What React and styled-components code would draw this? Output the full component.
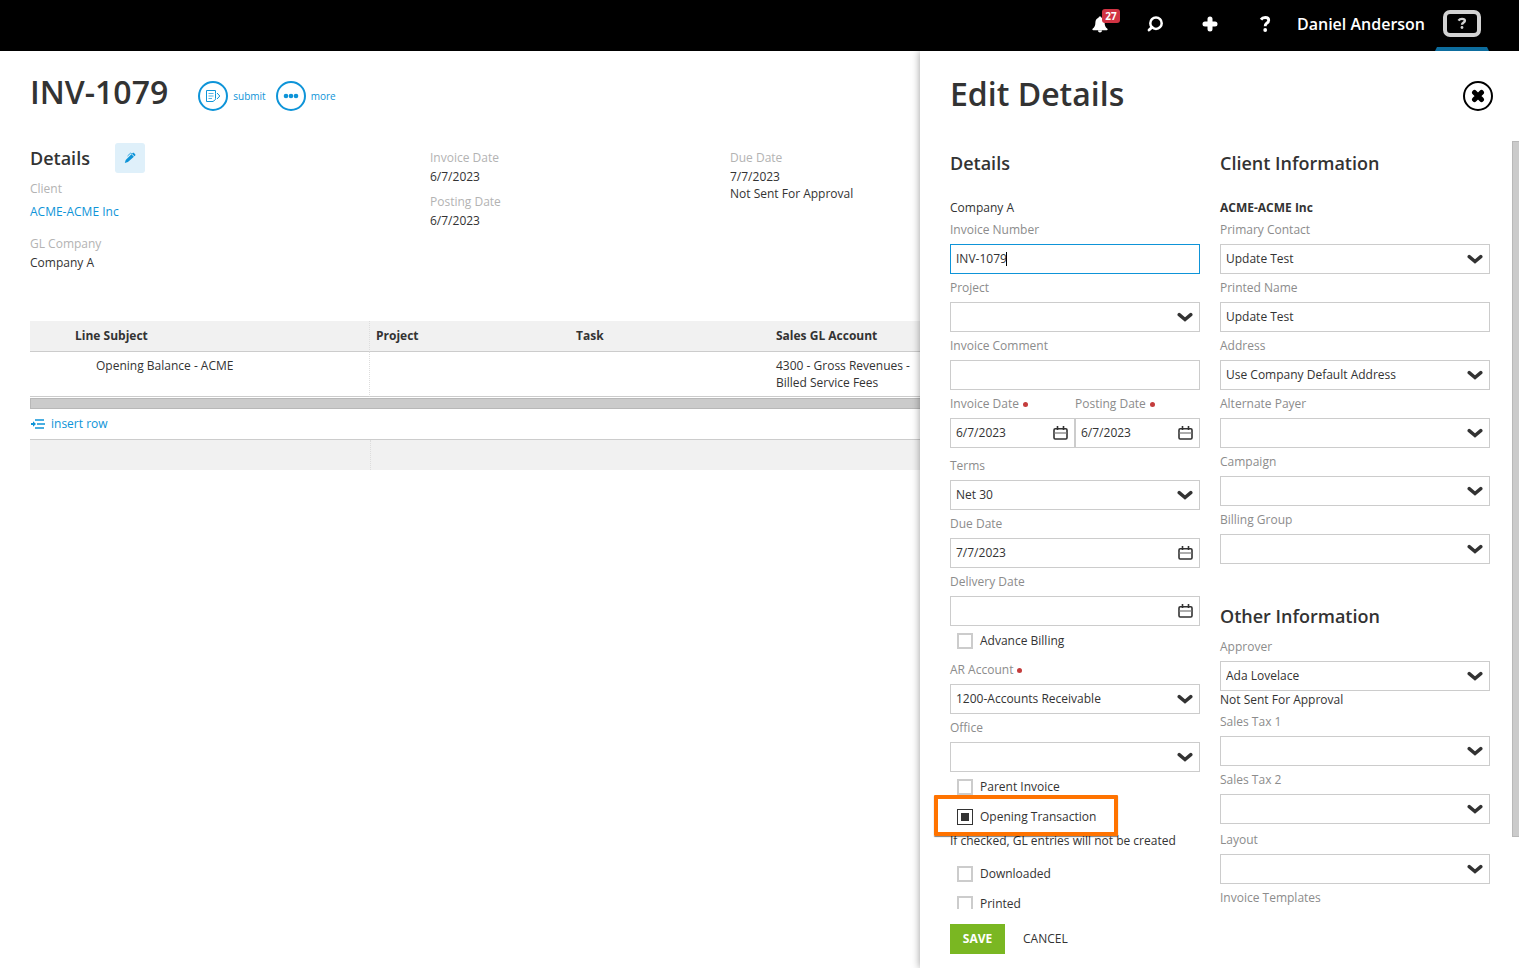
import React, { useState } from "react";
import styled, { createGlobalStyle } from "styled-components";

const GlobalStyle = createGlobalStyle`
  * {
    box-sizing: border-box;
  }
  body {
    margin: 0;
    background: #fff;
    color: #333;
    font-family: "Open Sans", "Liberation Sans", sans-serif;
    font-size: 12px;
    line-height: 17px;
  }
  button, input, select {
    font: inherit;
    color: inherit;
  }
  button {
    border: 0;
    padding: 0;
    background: none;
    cursor: pointer;
  }
`;

const Page = styled.div`
  display: flex;
  flex-direction: column;
  height: 100vh;
  overflow: hidden;
`;

/* ---------- top bar ---------- */

const TopBar = styled.header`
  display: flex;
  flex: none;
  justify-content: flex-end;
  height: 51px;
  padding-right: 30px;
  background: #000;
  color: #fff;
`;

const BarButton = styled.button`
  position: relative;
  display: flex;
  align-items: center;
  justify-content: center;
  width: 55px;
  height: 48px;
`;

const Badge = styled.span`
  position: absolute;
  top: 9px;
  left: 29px;
  width: 18px;
  height: 14px;
  border-radius: 3px;
  background: #d13343;
  font-size: 10px;
  font-weight: 700;
  line-height: 14px;
  text-align: center;
`;

const UserButton = styled.button`
  height: 48px;
  margin-left: 4px;
  font-size: 16px;
  font-weight: 600;
`;

const HelpTab = styled.button`
  display: flex;
  flex-direction: column;
  align-items: center;
  justify-content: space-between;
  width: 54px;
  height: 51px;
  margin-left: 10px;
  padding-top: 10px;
`;

/* ---------- invoice ---------- */

const Body = styled.div`
  display: flex;
  flex: 1;
  min-height: 0;
`;

const Invoice = styled.main`
  flex: 1;
  min-width: 0;
  padding: 20px 0 0 30px;
  overflow: hidden;
`;

const TitleRow = styled.div`
  display: flex;
  align-items: center;
  gap: 30px;
  height: 44px;
`;

const Title = styled.h1`
  margin: 0;
  padding-bottom: 2px;
  font-size: 32px;
  font-weight: 600;
  line-height: 44px;
`;

const Actions = styled.div`
  display: flex;
  gap: 10px;
  padding-top: 6px;
`;

const RoundAction = styled.button`
  display: flex;
  align-items: center;
  gap: 5px;
  color: #0e94d8;
  font-size: 10px;
`;

const Ring = styled.span`
  display: flex;
  align-items: center;
  justify-content: center;
  width: 30px;
  height: 30px;
  border: 2px solid #0e94d8;
  border-radius: 50%;
`;

const Summary = styled.section`
  display: grid;
  grid-template-columns: 400px 300px 1fr;
  margin-top: 28px;
`;

const SummaryColumn = styled.div`
  padding-top: ${(props) => (props.$first ? "0" : "6px")};
`;

const SummaryHead = styled.div`
  display: flex;
  align-items: center;
  gap: 25px;
  height: 30px;
  margin-bottom: 7px;
`;

const SectionTitle = styled.h2`
  margin: 0;
  font-size: 18px;
  font-weight: 600;
  line-height: 34px;
`;

const EditButton = styled.button`
  display: flex;
  align-items: center;
  justify-content: center;
  width: 30px;
  height: 30px;
  border-radius: 3px;
  background: #dff0fa;
`;

const Facts = styled.dl`
  margin: 0 0 8px;
`;

const FactLabel = styled.dt`
  padding-bottom: 2px;
  color: #b3b3b3;
`;

const FactValue = styled.dd`
  margin: 0;
  padding: ${(props) => (props.$spaced ? "4px 0 7px" : "0")};
`;

const Link = styled.a`
  color: #0e94d8;
  text-decoration: none;
`;

const Lines = styled.section`
  margin-top: 42px;
`;

const LinesTable = styled.table`
  width: 100%;
  table-layout: fixed;
  border-collapse: separate;
  border-spacing: 0;
`;

const Col = styled.col`
  width: ${(props) => props.$width};
`;

const Th = styled.th`
  height: 31px;
  padding: 0 6px 2px;
  padding-left: ${(props) => (props.$lead ? "45px" : "6px")};
  border-right: ${(props) => (props.$lead ? "1px dotted #ddd" : "0")};
  border-bottom: 1px solid #ccc;
  background: #f1f1f1;
  font-weight: 700;
  text-align: left;
`;

const Td = styled.td`
  padding: 5px 6px;
  padding-left: ${(props) => (props.$lead ? "66px" : "6px")};
  border-right: ${(props) => (props.$lead ? "1px dotted #ddd" : "0")};
  border-bottom: 1px solid #ccc;
  vertical-align: top;
`;

const ScrollBar = styled.div`
  height: 11px;
  margin-top: 1px;
  border: 1px solid #b8b8b8;
  border-right: 0;
  background: #cbcbcb;
`;

const InsertRow = styled.div`
  display: flex;
  align-items: center;
  height: 31px;
  padding-bottom: 1px;
  border-bottom: 1px solid #ccc;
`;

const InsertButton = styled.button`
  display: flex;
  align-items: center;
  gap: 6px;
  color: #0e94d8;
`;

const Totals = styled.div`
  height: 30px;
  background: #f1f1f1;
`;

const TotalsLead = styled.div`
  width: 341px;
  height: 30px;
  border-right: 1px dotted #ddd;
`;

/* ---------- edit drawer ---------- */

const Drawer = styled.aside`
  z-index: 1;
  display: flex;
  flex: 0 0 599px;
  flex-direction: column;
  background: #fff;
  box-shadow: 0 0 8px rgba(0, 0, 0, 0.4);
  clip-path: inset(0 0 0 -12px);
`;

const DrawerHead = styled.div`
  display: flex;
  flex: none;
  align-items: center;
  justify-content: space-between;
  height: 90px;
  padding: 0 26px 2px 30px;
`;

const CloseButton = styled.button`
  display: flex;
  align-items: center;
  justify-content: center;
  width: 30px;
  height: 30px;
  margin-top: 2px;
  border: 2px solid #000;
  border-radius: 50%;
`;

const DrawerBody = styled.div`
  display: flex;
  flex: 1;
  gap: 20px;
  min-height: 0;
  padding-left: 30px;
  overflow: hidden;
`;

const Column = styled.div`
  flex: ${(props) => props.$grow} 1 0;
  padding-top: 5px;
`;

const Intro = styled.div`
  padding-top: 19px;
  font-weight: ${(props) => (props.$strong ? 700 : 400)};
`;

const Note = styled.p`
  margin: 0;
  padding-bottom: ${(props) => (props.$below ? "10px" : "0")};
`;

const Block = styled.section`
  margin-top: ${(props) => (props.$below ? "35px" : "0")};
`;

const VScroll = styled.div`
  width: 7px;
  height: calc(100% - 72px);
  margin-left: 2px;
  border: 1px solid #b8b8b8;
  border-right: 0;
  background: #cbcbcb;
`;

const FieldBox = styled.div`
  flex: 1;
  min-width: 0;
  padding-top: ${(props) => (props.$gap ? "2px" : "0")};
`;

const Label = styled.label`
  display: flex;
  align-items: center;
  gap: 4px;
  height: 28px;
  padding-bottom: 1px;
  color: #8c8c8c;
`;

const Dot = styled.span`
  width: 5px;
  height: 5px;
  margin-top: 2px;
  border-radius: 50%;
  background: #c43d3d;
`;

const Control = styled.div`
  display: grid;
  align-items: center;
  > * {
    grid-area: 1 / 1;
  }
  > svg {
    justify-self: end;
    margin-right: 7px;
    pointer-events: none;
  }
`;

const TextInput = styled.input`
  width: 100%;
  height: 30px;
  padding: 0 5px 2px;
  border: 1px solid ${(props) => (props.$active ? "#0e94d8" : "#ccc")};
  border-radius: 0;
  outline: 0;
  background: #fff;
`;

const SelectInput = styled(TextInput).attrs({ as: "select" })`
  appearance: none;
`;

const Caret = styled.span`
  width: 1px;
  height: 14px;
  margin-left: 56px;
  background: #000;
`;

const DatePair = styled.div`
  display: flex;
  padding-bottom: 4px;
`;

const CheckRow = styled.div`
  position: relative;
  display: flex;
  align-items: center;
  height: 30px;
  padding-left: 7px;
`;

const CheckLabel = styled.label`
  padding: 0 0 1px 7px;
`;

const CheckBox = styled.input`
  width: 16px;
  height: 16px;
  margin: 0;
  appearance: none;
  border: 2px solid #ccc;
  background: #fff;
  &:checked {
    border: 1px solid #333;
    background: #333;
    box-shadow: inset 0 0 0 3px #fff;
  }
`;

const Highlight = styled.span`
  position: absolute;
  top: -7px;
  left: -16px;
  width: 184px;
  height: 41px;
  border: 4px solid #ff7300;
  border-radius: 1px;
  box-shadow: 0 1px 1px rgba(0, 0, 0, 0.5);
  pointer-events: none;
`;

const DrawerFoot = styled.div`
  display: flex;
  flex: none;
  gap: 18px;
  height: 59px;
  padding: 15px 30px 0;
`;

const SaveButton = styled.button`
  width: 55px;
  height: 30px;
  padding-bottom: 2px;
  background: #7ab722;
  color: #fff;
  font-weight: 700;
`;

const CancelButton = styled.button`
  height: 30px;
  padding-bottom: 2px;
  font-weight: 500;
`;

/* ---------- icons ---------- */

const BellIcon = () => (
  <svg width="16" height="17" viewBox="0 0 16 17" fill="#fff">
    <path d="M8 0.5c.8 0 1.4.5 1.5 1.3 2 .7 3 2.300 3.100 4.400.1 3.200.5 4.800 2.800 6.500.5.6.2 1.500-.6 1.500H1.200c-.8 0-1.100-.9-.6-1.500C2.900 11 3.300 9.400 3.400 6.200 3.500 4.100 4.500 2.500 6.500 1.800 6.600 1 7.200.5 8 .5zM6 14.500h4c0 1.300-.9 2-2 2s-2-.7-2-2z" />
  </svg>
);

const SearchIcon = () => (
  <svg width="16" height="16" viewBox="0 0 16 16" fill="none" stroke="#fff">
    <circle cx="9" cy="7.200" r="5.700" strokeWidth="2.500" />
    <path d="M5 11.200L2 14" strokeWidth="2.800" strokeLinecap="round" />
  </svg>
);

const PlusIcon = () => (
  <svg width="16" height="16" viewBox="0 0 16 16" stroke="#fff" strokeWidth="5" strokeLinecap="round">
    <path d="M8 3v10M3 8h10" />
  </svg>
);

const QuestionIcon = () => (
  <svg width="16" height="16" viewBox="0 0 16 16" fill="none">
    <path
      d="M4 3.600C5 2.100 6.500 1.500 8.200 1.500c2.200 0 3.500 1 3.500 2.700 0 1.800-1 2.400-2.200 3.200C8.600 8.100 8.200 8.700 8.200 10.300"
      stroke="#fff"
      strokeWidth="2.900"
    />
    <circle cx="8.200" cy="14" r="1.900" fill="#fff" />
  </svg>
);

const HelpBoxIcon = () => (
  <svg width="38" height="27" viewBox="0 0 38 27" fill="none">
    <rect x="2" y="2" width="34" height="23" rx="5" stroke="#d2d2d2" strokeWidth="4" />
    <path
      d="M15.500 10.600c.9-1.300 2-1.700 3.500-1.700 1.800 0 2.900.7 2.900 1.900 0 1.700-2.900 1.700-2.900 3.900"
      stroke="#d2d2d2"
      strokeWidth="2.400"
    />
    <circle cx="19" cy="17.500" r="1.400" fill="#d2d2d2" />
  </svg>
);

const TabMark = () => (
  <svg width="54" height="4" viewBox="0 0 54 4">
    <path d="M2 0h50l2 4H0z" fill="#0d6d9e" />
  </svg>
);

const SubmitIcon = () => (
  <svg width="16" height="14" viewBox="0 0 16 14" fill="none" stroke="#0e94d8">
    <path d="M10.500 4.500V1.500H1.500v11H8L10.500 10.500V9.500" />
    <path d="M3.500 4.500h5M3.500 7h5M3.500 9.500h3.500" strokeWidth="0.700" />
    <path d="M10.500 4.500v5M12 4l2.800 3L12 10" />
  </svg>
);

const MoreIcon = () => (
  <svg width="16" height="6" viewBox="0 0 16 6" fill="#0e94d8">
    <circle cx="3" cy="3" r="2.300" />
    <circle cx="8" cy="3" r="2.300" />
    <circle cx="13" cy="3" r="2.300" />
  </svg>
);

const PencilIcon = () => (
  <svg width="12" height="12" viewBox="0 0 12 12" fill="#0e94d8">
    <path d="M.8 11l.9-3L7.400 2.300l2.500 2.500-6 5.200zM7.900 1.800l.8-.8c.4-.4.9-.4 1.300 0l1.200 1.200c.4.4.4.9 0 1.300l-.8.8z" />
    <path d="M3.500 4L6.500 1.200 8 2" fill="none" stroke="#0e94d8" strokeWidth="0.800" />
  </svg>
);

const InsertIcon = () => (
  <svg width="15" height="10" viewBox="0 0 15 10" fill="#0e94d8">
    <path d="M5 .3h9v1.500H5zM7 4.300h8v1.500H7zM5 8.200h9v1.500H5zM3 2.200l3 2.800-3 2.800V6H1V4h2z" />
  </svg>
);

const ChevronIcon = () => (
  <svg width="16" height="10" viewBox="0 0 16 10" fill="none">
    <path d="M2.200 2.600L8 7.500l5.800-4.900" stroke="#333" strokeWidth="3.400" strokeLinecap="round" />
  </svg>
);

const CalendarIcon = () => (
  <svg width="15" height="14" viewBox="0 0 15 14" fill="none" stroke="#333">
    <rect x="1" y="2.700" width="13" height="10.300" rx="1.200" strokeWidth="1.600" />
    <path d="M1 7h13" strokeWidth="1.200" stroke="#777" />
    <path d="M4.500 0v4M10.500 0v4" strokeWidth="1.600" />
  </svg>
);

const CloseIcon = () => (
  <svg width="14" height="14" viewBox="0 0 14 14" stroke="#000" strokeWidth="5" strokeLinecap="round">
    <path d="M3.500 3.500l7 7M10.500 3.500l-7 7" />
  </svg>
);

/* ---------- form parts ---------- */

const Field = ({ id, label, value = "", type, required, active, gap }) => {
  const [current, setCurrent] = useState(value);
  const handleChange = (e) => setCurrent(e.target.value);

  return (
    <FieldBox $gap={gap}>
      <Label htmlFor={id}>
        {label}
        {required && <Dot />}
      </Label>
      <Control>
        {type === "select" ? (
          <SelectInput id={id} value={current} onChange={handleChange}>
            <option value={value}>{value}</option>
          </SelectInput>
        ) : (
          <TextInput
            id={id}
            type="text"
            value={current}
            onChange={handleChange}
            $active={active}
          />
        )}
        {type === "select" && <ChevronIcon />}
        {type === "date" && <CalendarIcon />}
        {active && <Caret />}
      </Control>
    </FieldBox>
  );
};

const Check = ({ id, label, checked = false, highlight }) => {
  const [on, setOn] = useState(checked);

  return (
    <CheckRow>
      <CheckBox id={id} type="checkbox" checked={on} onChange={() => setOn(!on)} />
      <CheckLabel htmlFor={id}>{label}</CheckLabel>
      {highlight && <Highlight />}
    </CheckRow>
  );
};

const EditDrawer = () => (
  <Drawer>
    <DrawerHead>
      <Title as="h2">Edit Details</Title>
      <CloseButton aria-label="Close">
        <CloseIcon />
      </CloseButton>
    </DrawerHead>
    <DrawerBody>
      <Column $grow={25}>
        <SectionTitle>Details</SectionTitle>
        <Intro>Company A</Intro>
        <Field id="number" label="Invoice Number" value="INV-1079" active />
        <Field id="project" label="Project" type="select" />
        <Field id="comment" label="Invoice Comment" />
        <DatePair>
          <Field id="invoiceDate" label="Invoice Date" value="6/7/2023" type="date" required />
          <Field id="postingDate" label="Posting Date" value="6/7/2023" type="date" required />
        </DatePair>
        <Field id="terms" label="Terms" value="Net 30" type="select" />
        <Field id="dueDate" label="Due Date" value="7/7/2023" type="date" />
        <Field id="deliveryDate" label="Delivery Date" type="date" />
        <Check id="advance" label="Advance Billing" />
        <Field id="ar" label="AR Account" value="1200-Accounts Receivable" type="select" required />
        <Field id="office" label="Office" type="select" />
        <Check id="parent" label="Parent Invoice" />
        <Check id="opening" label="Opening Transaction" checked highlight />
        <Note $below>If checked, GL entries will not be created</Note>
        <Check id="downloaded" label="Downloaded" />
        <Check id="printed" label="Printed" />
      </Column>
      <Column $grow={27}>
        <Block>
          <SectionTitle>Client Information</SectionTitle>
          <Intro $strong>ACME-ACME Inc</Intro>
          <Field id="contact" label="Primary Contact" value="Update Test" type="select" />
          <Field id="printedName" label="Printed Name" value="Update Test" />
          <Field id="address" label="Address" value="Use Company Default Address" type="select" />
          <Field id="payer" label="Alternate Payer" type="select" />
          <Field id="campaign" label="Campaign" type="select" />
          <Field id="group" label="Billing Group" type="select" />
        </Block>
        <Block $below>
          <SectionTitle>Other Information</SectionTitle>
          <Field id="approver" label="Approver" value="Ada Lovelace" type="select" />
          <Note>Not Sent For Approval</Note>
          <Field id="tax1" label="Sales Tax 1" type="select" />
          <Field id="tax2" label="Sales Tax 2" type="select" />
          <Field id="layout" label="Layout" type="select" gap />
          <Field id="templates" label="Invoice Templates" type="select" />
        </Block>
      </Column>
      <VScroll />
    </DrawerBody>
    <DrawerFoot>
      <SaveButton>SAVE</SaveButton>
      <CancelButton>CANCEL</CancelButton>
    </DrawerFoot>
  </Drawer>
);

const App = () => {
  return (
    <>
      <GlobalStyle />
      <Page>
        <TopBar>
          <BarButton aria-label="Notifications">
            <BellIcon />
            <Badge>27</Badge>
          </BarButton>
          <BarButton aria-label="Search">
            <SearchIcon />
          </BarButton>
          <BarButton aria-label="Add">
            <PlusIcon />
          </BarButton>
          <BarButton aria-label="Help">
            <QuestionIcon />
          </BarButton>
          <UserButton>Daniel Anderson</UserButton>
          <HelpTab aria-label="Support">
            <HelpBoxIcon />
            <TabMark />
          </HelpTab>
        </TopBar>
        <Body>
          <Invoice>
            <TitleRow>
              <Title>INV-1079</Title>
              <Actions>
                <RoundAction>
                  <Ring>
                    <SubmitIcon />
                  </Ring>
                  submit
                </RoundAction>
                <RoundAction>
                  <Ring>
                    <MoreIcon />
                  </Ring>
                  more
                </RoundAction>
              </Actions>
            </TitleRow>
            <Summary>
              <SummaryColumn $first>
                <SummaryHead>
                  <SectionTitle>Details</SectionTitle>
                  <EditButton aria-label="Edit details">
                    <PencilIcon />
                  </EditButton>
                </SummaryHead>
                <Facts>
                  <FactLabel>Client</FactLabel>
                  <FactValue $spaced>
                    <Link href="#client">ACME-ACME Inc</Link>
                  </FactValue>
                </Facts>
                <Facts>
                  <FactLabel>GL Company</FactLabel>
                  <FactValue>Company A</FactValue>
                </Facts>
              </SummaryColumn>
              <SummaryColumn>
                <Facts>
                  <FactLabel>Invoice Date</FactLabel>
                  <FactValue>6/7/2023</FactValue>
                </Facts>
                <Facts>
                  <FactLabel>Posting Date</FactLabel>
                  <FactValue>6/7/2023</FactValue>
                </Facts>
              </SummaryColumn>
              <SummaryColumn>
                <Facts>
                  <FactLabel>Due Date</FactLabel>
                  <FactValue>7/7/2023</FactValue>
                  <FactValue>Not Sent For Approval</FactValue>
                </Facts>
              </SummaryColumn>
            </Summary>
            <Lines>
              <LinesTable>
                <colgroup>
                  <Col $width="340px" />
                  <Col $width="200px" />
                  <Col $width="200px" />
                  <Col $width="auto" />
                </colgroup>
                <thead>
                  <tr>
                    <Th $lead>Line Subject</Th>
                    <Th>Project</Th>
                    <Th>Task</Th>
                    <Th>Sales GL Account</Th>
                  </tr>
                </thead>
                <tbody>
                  <tr>
                    <Td $lead>Opening Balance - ACME</Td>
                    <Td />
                    <Td />
                    <Td>4300 - Gross Revenues - Billed Service Fees</Td>
                  </tr>
                </tbody>
              </LinesTable>
              <ScrollBar />
              <InsertRow>
                <InsertButton>
                  <InsertIcon />
                  insert row
                </InsertButton>
              </InsertRow>
              <Totals>
                <TotalsLead />
              </Totals>
            </Lines>
          </Invoice>
          <EditDrawer />
        </Body>
      </Page>
    </>
  );
};

export default App;
